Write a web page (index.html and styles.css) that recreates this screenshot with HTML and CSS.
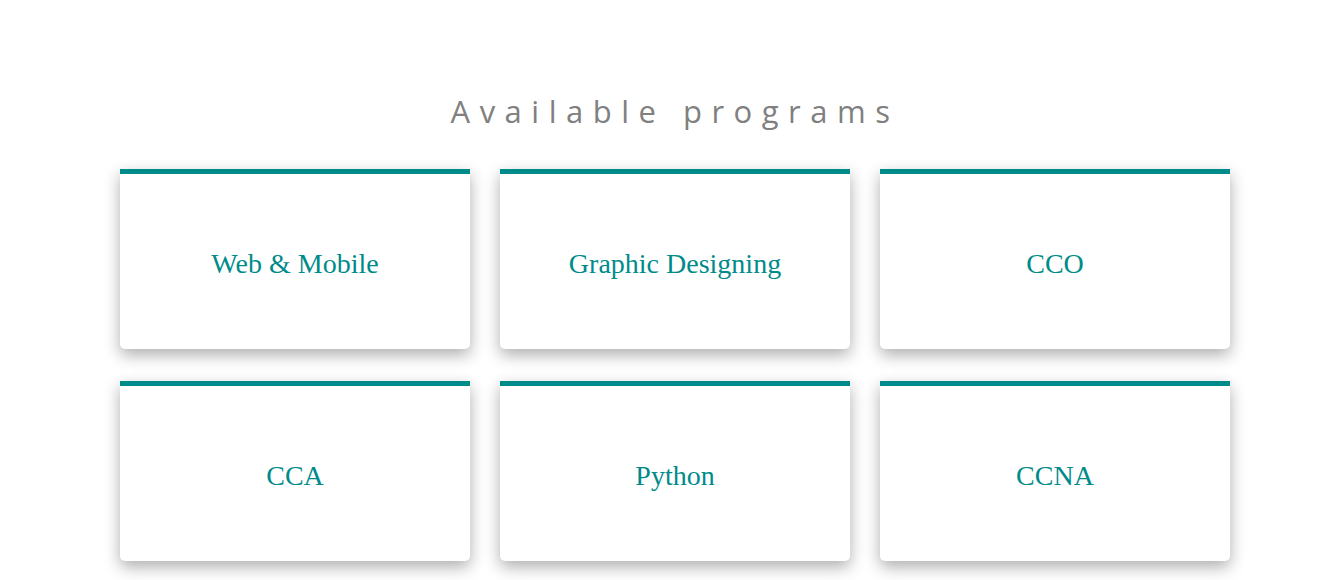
FILE: index.html
```html
<!DOCTYPE html>
<html>
<head>
<meta charset="utf-8">
<link rel="stylesheet" href="styles.css">
</head>
<body>
<section class="programs">
  <h1 class="title">Available programs</h1>
  <div class="grid">
    <div class="card"><span>Web &amp; Mobile</span></div>
    <div class="card"><span>Graphic Designing</span></div>
    <div class="card"><span>CCO</span></div>
    <div class="card"><span>CCA</span></div>
    <div class="card"><span>Python</span></div>
    <div class="card"><span>CCNA</span></div>
  </div>
</section>
</body>
</html>
```
FILE: styles.css
```css
html, body {
  margin: 0;
  padding: 0;
  background: #ffffff;
}
.programs {
  width: 1110px;
  margin-left: 120px;
  padding-top: 91px;
  padding-bottom: 19px;
}
.title {
  margin: 0 0 38px 0;
  font-family: "Open Sans", sans-serif;
  font-weight: 400;
  font-size: 31px;
  line-height: 40px;
  letter-spacing: 9.5px;
  color: #808080;
  text-align: center;
}
.grid {
  display: grid;
  grid-template-columns: repeat(3, 350px);
  column-gap: 30px;
  row-gap: 32px;
}
.card {
  height: 175px;
  border-top: 5px solid #008b8b;
  border-radius: 0 0 5px 5px;
  background: #fff;
  box-shadow: 0 6px 16px rgba(0, 0, 0, 0.32);
  display: flex;
  align-items: center;
  justify-content: center;
  font-family: "Liberation Serif", serif;
  font-size: 28px;
  color: #008b8b;
}
.card span {
  position: relative;
  top: 2px;
}
```
